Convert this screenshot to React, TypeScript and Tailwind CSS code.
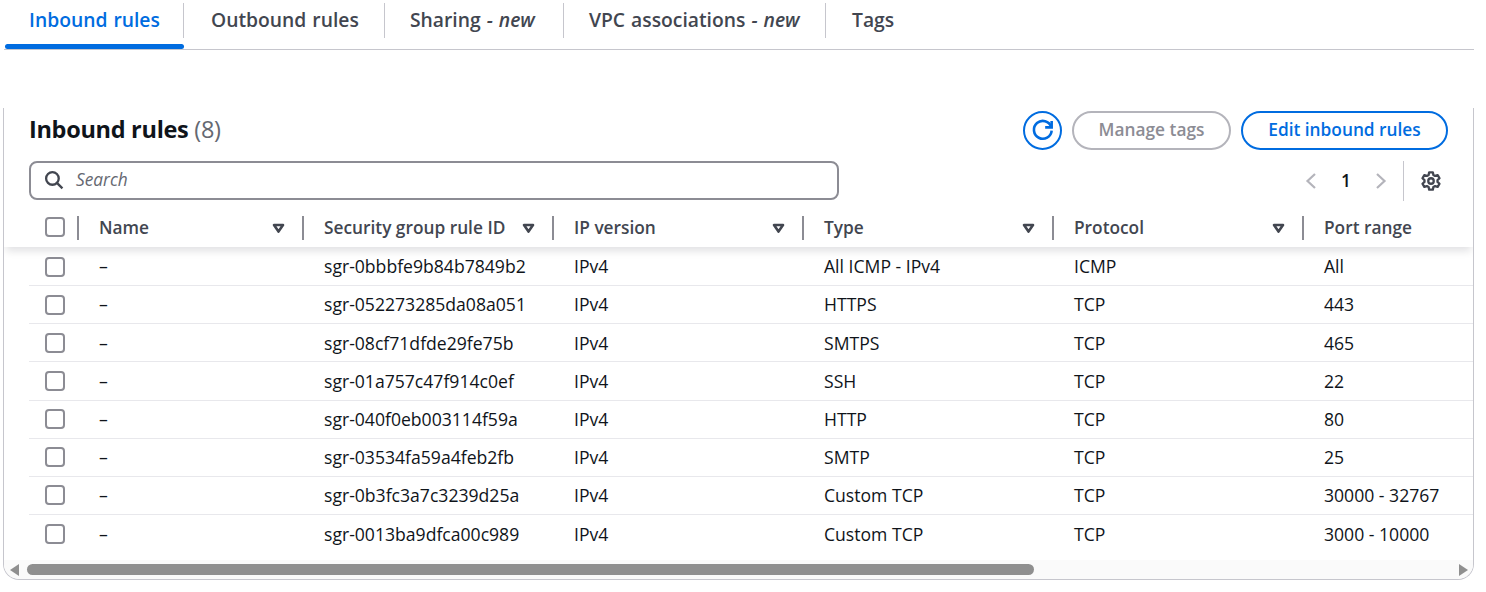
import React from 'react';

const rows = [
  { id: 'sgr-0bbbfe9b84b7849b2', type: 'All ICMP - IPv4', protocol: 'ICMP', port: 'All' },
  { id: 'sgr-052273285da08a051', type: 'HTTPS', protocol: 'TCP', port: '443' },
  { id: 'sgr-08cf71dfde29fe75b', type: 'SMTPS', protocol: 'TCP', port: '465' },
  { id: 'sgr-01a757c47f914c0ef', type: 'SSH', protocol: 'TCP', port: '22' },
  { id: 'sgr-040f0eb003114f59a', type: 'HTTP', protocol: 'TCP', port: '80' },
  { id: 'sgr-03534fa59a4feb2fb', type: 'SMTP', protocol: 'TCP', port: '25' },
  { id: 'sgr-0b3fc3a7c3239d25a', type: 'Custom TCP', protocol: 'TCP', port: '30000 - 32767' },
  { id: 'sgr-0013ba9dfca00c989', type: 'Custom TCP', protocol: 'TCP', port: '3000 - 10000' },
];

const Checkbox = () => (
  <div className="w-[20px] h-[20px] rounded-[4px] border-2 border-[#8c8c94] bg-white shrink-0" />
);

const SortCaret = () => (
  <svg width="13" height="11" viewBox="0 0 13 11" className="shrink-0">
    <path d="M2 2h9L6.5 8.6z" fill="none" stroke="#424650" strokeWidth="2.6" strokeLinejoin="round" />
  </svg>
);

const Tab = ({ label, suffix, active, last, width, pad }: { label: string; suffix?: string; active?: boolean; last?: boolean; width: string; pad: string }) => (
  <div className={`${width} relative h-[49px] flex items-start`}>
    <div className={`w-full h-[35px] mt-[3px] flex items-center ${pad} ${last ? '' : 'border-r border-[#c6c6cd]'}`}>
      <span className={`text-[19.3px] font-semibold whitespace-nowrap [word-spacing:1px] ${active ? 'text-[#006ce0]' : 'text-[#424650]'}`}>
        {label}
        {suffix && <em> - {suffix}</em>}
      </span>
    </div>
    {active && <div className="absolute left-0 right-0 bottom-0 h-[5px] rounded-[3px] bg-[#006ce0]" />}
  </div>
);

const HeaderCell = ({ label, width, caret = true }: { label: string; width: string; caret?: boolean }) => (
  <div className={`${width} shrink-0 h-[24px] mt-[2px] flex items-center justify-between pl-[20px] pr-[17px] border-l-2 border-[#8c8c94]`}>
    <span className="text-[17.3px] font-semibold text-[#424650] whitespace-nowrap">{label}</span>
    {caret && <SortCaret />}
  </div>
);

export default function App() {
  return (
    <div className="w-[1486px] h-[592px] bg-white overflow-hidden pl-[4px] font-['Open_Sans',sans-serif] text-[#0f141a]">
      {/* tabs */}
      <div className="w-[1470px] h-[50px] flex border-b border-[#c6c6cd]">
        <div className="w-[1px]" />
        <Tab label="Inbound rules" active width="w-[179px]" pad="pl-[24px]" />
        <Tab label="Outbound rules" width="w-[201px]" pad="pl-[27px]" />
        <Tab label="Sharing" suffix="new" width="w-[179px]" pad="pl-[25px]" />
        <Tab label="VPC associations" suffix="new" width="w-[262px]" pad="pl-[25px]" />
        <Tab label="Tags" last width="w-[100px]" pad="pl-[26px]" />
      </div>

      {/* card */}
      <div className="w-[1471px] h-[472px] mt-[58px] -ml-[1px] border-x border-b border-[#c6c6cd] rounded-b-[16px] overflow-hidden flex flex-col relative">
        <div className="flex items-center justify-between h-[44px] pl-[25px] pr-[25px]">
          <h2 className="text-[23.5px] font-bold leading-none whitespace-nowrap tracking-[-0.3px] -mt-[1px]">
            Inbound rules <span className="font-normal text-[#656871]">(8)</span>
          </h2>
          <div className="flex items-center gap-[10px]">
            <button className="w-[39px] h-[39px] rounded-full border-2 border-[#006ce0] flex items-center justify-center">
              <svg width="26" height="26" viewBox="0 0 24 24" fill="none" stroke="#006ce0" strokeWidth="2.4">
                <path d="M19.6 9.2A8.2 8.2 0 1 0 20 12.5" />
                <path d="M20 3.6v6h-6" strokeLinejoin="miter" />
              </svg>
            </button>
            <button className="w-[159px] h-[39px] rounded-full border-2 border-[#b4b4bb] text-[17.3px] font-semibold text-[#8c8c94]">
              Manage tags
            </button>
            <button className="w-[207px] h-[39px] rounded-full border-2 border-[#006ce0] text-[17.3px] font-semibold text-[#006ce0]">
              Edit inbound rules
            </button>
          </div>
        </div>

        <div className="flex items-center justify-between mt-[8px] pl-[25px] pr-[30px] h-[40px]">
          <div className="w-[810px] h-[39px] rounded-[8px] border-2 border-[#8c8c94] flex items-center pl-[13px] gap-[12px]">
            <svg width="20" height="20" viewBox="0 0 19 19" fill="none" stroke="#424650" strokeWidth="2.2">
              <circle cx="8" cy="8" r="6" />
              <path d="M12.5 12.5L17.5 17.5" />
            </svg>
            <span className="text-[17.3px] italic text-[#656871]">Search</span>
          </div>
          <div className="flex items-center h-[40px] mt-[2px]">
            <svg width="14" height="18" viewBox="0 0 14 18" fill="none" stroke="#b4b4bb" strokeWidth="2.2">
              <path d="M11 2L3.5 9l7.5 7" />
            </svg>
            <span className="w-[56px] text-center text-[17.3px] font-semibold">1</span>
            <svg width="14" height="18" viewBox="0 0 14 18" fill="none" stroke="#b4b4bb" strokeWidth="2.2">
              <path d="M3 2l7.5 7L3 16" />
            </svg>
            <div className="w-px h-[40px] bg-[#c6c6cd] ml-[15px] mr-[16px]" />
            <svg width="22" height="22" viewBox="0 0 24 24" fill="none" stroke="#424650" strokeWidth="2.5" strokeLinejoin="round" className="mr-[1px]">
              <path d="M10 2.5h4l.6 2.9 1.9 1.1 2.8-.9 2 3.4-2.2 2v2l2.2 2-2 3.4-2.8-.9-1.9 1.1-.6 2.9h-4l-.6-2.9-1.9-1.1-2.8.9-2-3.4 2.2-2v-2l-2.2-2 2-3.4 2.8.9 1.9-1.1z" />
              <circle cx="12" cy="12" r="3" />
            </svg>
          </div>
        </div>

        {/* table header */}
        <div className="relative z-10 h-[40px] mt-[7px] bg-white flex items-center pl-[41px] shadow-[0_6px_8px_-2px_rgba(0,7,22,0.12)] shrink-0">
          <Checkbox />
          <div className="w-[12px] shrink-0" />
          <HeaderCell label="Name" width="w-[225px]" />
          <HeaderCell label="Security group rule ID" width="w-[250px]" />
          <HeaderCell label="IP version" width="w-[250px]" />
          <HeaderCell label="Type" width="w-[250px]" />
          <HeaderCell label="Protocol" width="w-[250px]" />
          <HeaderCell label="Port range" width="w-[170px]" caret={false} />
        </div>

        {/* rows */}
        <div className="ml-[25px] pt-[1px]">
          {rows.map((r, i) => (
            <div key={r.id} className={`h-[38.14px] flex items-center pl-[16px] text-[17.6px] whitespace-nowrap ${i < rows.length - 1 ? 'border-b border-[#e8e8ec]' : ''}`}>
              <Checkbox />
              <div className="w-[34px] shrink-0" />
              <div className="w-[225px] shrink-0">–</div>
              <div className="w-[250px] shrink-0">{r.id}</div>
              <div className="w-[250px] shrink-0">IPv4</div>
              <div className="w-[250px] shrink-0">{r.type}</div>
              <div className="w-[250px] shrink-0">{r.protocol}</div>
              <div className="shrink-0">{r.port}</div>
            </div>
          ))}
        </div>

        {/* horizontal scrollbar */}
        <div className="absolute left-0 right-0 bottom-0 h-[19px] bg-[#fafafa] flex items-center pl-[6px] pr-[5px]">
          <div className="w-0 h-0 border-y-[6px] border-y-transparent border-r-[9px] border-r-[#8f8f8f]" />
          <div className="w-[1007px] h-[11px] ml-[8px] rounded-full bg-[#8f8f8f]" />
          <div className="ml-auto w-0 h-0 border-y-[6px] border-y-transparent border-l-[9px] border-l-[#8f8f8f]" />
        </div>
      </div>
    </div>
  );
}
